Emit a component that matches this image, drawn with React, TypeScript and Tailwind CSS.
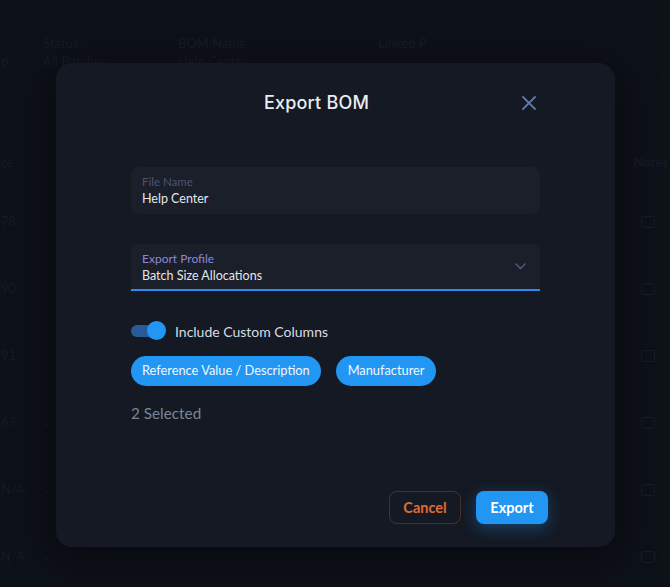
import React from "react";

const faint = "text-[#161b24]";

function Bg() {
  const rows = ["ce", "78", "90", "91", "63", "N/A", "N/A"];
  return (
    <div className="flex flex-col w-full h-full font-['Lato',sans-serif] text-[13px]">
      <div className="h-[36px] shrink-0" />
      <div className={`h-[16px] flex items-center ${faint}`}>
        <span className="ml-[43px] w-[135px]">Status</span>
        <span className="w-[200px]">BOM Name</span>
        <span>Linked P</span>
      </div>
      <div className={`h-[24px] flex items-center ${faint}`}>
        <span className="w-[43px] pl-[1px]">p</span>
        <span className="w-[135px]">All Batches</span>
        <span className="w-[200px]">Help Center</span>
      </div>
      <div className="h-[82px] shrink-0" />
      <div className="flex flex-col">
        {rows.map((r, i) => (
          <div
            key={i}
            className={`flex items-center justify-between h-[18px] ${i === 0 ? "mb-[41px]" : "mb-[49px]"} ${faint}`}
          >
            <div className="flex items-center">
              <span className="w-[22px] pl-[1px] whitespace-nowrap">{r}</span>
              {i > 0 && <span className="ml-[20px] text-[10px]">⌄</span>}
            </div>
            {i === 0 ? (
              <span className="mr-[2px] font-bold">Notes</span>
            ) : (
              <span className="mr-[15px] w-[14px] h-[12px] border border-[#161b24] rounded-[2px]" />
            )}
          </div>
        ))}
      </div>
    </div>
  );
}

export default function App() {
  return (
    <div className="relative w-[670px] h-[587px] overflow-hidden bg-[#0d1118]">
      <Bg />
      <div className="absolute left-[56px] top-[63px] w-[559px] h-[484px] rounded-[16px] bg-[#141923] flex flex-col font-['Lato',sans-serif] shadow-[0_10px_40px_rgba(0,0,0,0.5)]">
        <div className="mt-[21px] h-[38px] px-[75px] flex items-center">
          <div className="flex-1 text-center text-[18px] leading-[24px] font-medium text-[#e8ecf2] font-['Inter',sans-serif] tracking-[0.2px]">
            Export BOM
          </div>
          <div className="w-[38px] h-[38px] flex items-center justify-end pr-[4px]">
            <svg width="14" height="14" viewBox="0 0 14 14" fill="none">
              <path d="M1 1L13 13M13 1L1 13" stroke="#5b79a6" strokeWidth="1.8" strokeLinecap="round" />
            </svg>
          </div>
        </div>

        <div className="mx-[75px] mt-[45px] h-[47px] rounded-[8px] bg-[#1a1f2a] px-[11px] flex flex-col justify-center">
          <div className="text-[11.5px] leading-[16px] text-[#4a5475]">File Name</div>
          <div className="text-[12.5px] leading-[18px] text-[#e3e6ec]">Help Center</div>
        </div>

        <div className="mx-[75px] mt-[30px] h-[47px] rounded-t-[8px] bg-[#1a1f2a] border-b-2 border-[#2a8cf0] px-[11px] flex items-center">
          <div className="flex-1 flex flex-col justify-center pt-[2px]">
            <div className="text-[12px] leading-[16px] text-[#8c87db]">Export Profile</div>
            <div className="text-[12.5px] leading-[18px] text-[#e3e6ec]">Batch Size Allocations</div>
          </div>
          <svg width="11" height="7" viewBox="0 0 11 7" fill="none" className="mr-[3px]">
            <path d="M1 1L5.5 5.5L10 1" stroke="#4f5f8c" strokeWidth="1.4" strokeLinecap="round" strokeLinejoin="round" />
          </svg>
        </div>

        <div className="mx-[75px] mt-[28px] h-[24px] flex items-center">
          <div className="relative w-[36px] h-[20px] flex items-center">
            <div className="w-[30px] h-[12px] rounded-full bg-[#285a98]" />
            <div className="absolute left-[16px] top-[0px] w-[19px] h-[19px] rounded-full bg-[#2196f3]" />
          </div>
          <span className="ml-[8px] text-[14px] text-[#d8dce3]">Include Custom Columns</span>
        </div>

        <div className="mx-[75px] mt-[13px] flex gap-[15px]">
          <div className="h-[30px] px-[11px] rounded-full bg-[#2196f3] flex items-center text-[12.8px] text-[#f2f7fd]">
            Reference Value / Description
          </div>
          <div className="h-[30px] px-[12px] rounded-full bg-[#2196f3] flex items-center text-[12.8px] text-[#f2f7fd]">
            Manufacturer
          </div>
        </div>

        <div className="mx-[75px] mt-[15px] text-[15.3px] leading-[24px] text-[#7b8599]">2 Selected</div>

        <div className="mt-auto mb-[23px] mr-[67px] flex justify-end gap-[15px]">
          <button className="h-[33px] w-[72px] rounded-[8px] border border-[#4a302c] text-[14.5px] font-bold text-[#e06b36]">
            Cancel
          </button>
          <button className="h-[33px] w-[72px] rounded-[8px] bg-[#2196f3] text-[14.5px] font-bold text-white shadow-[0_4px_16px_rgba(33,150,243,0.35)]">
            Export
          </button>
        </div>
      </div>
    </div>
  );
}
